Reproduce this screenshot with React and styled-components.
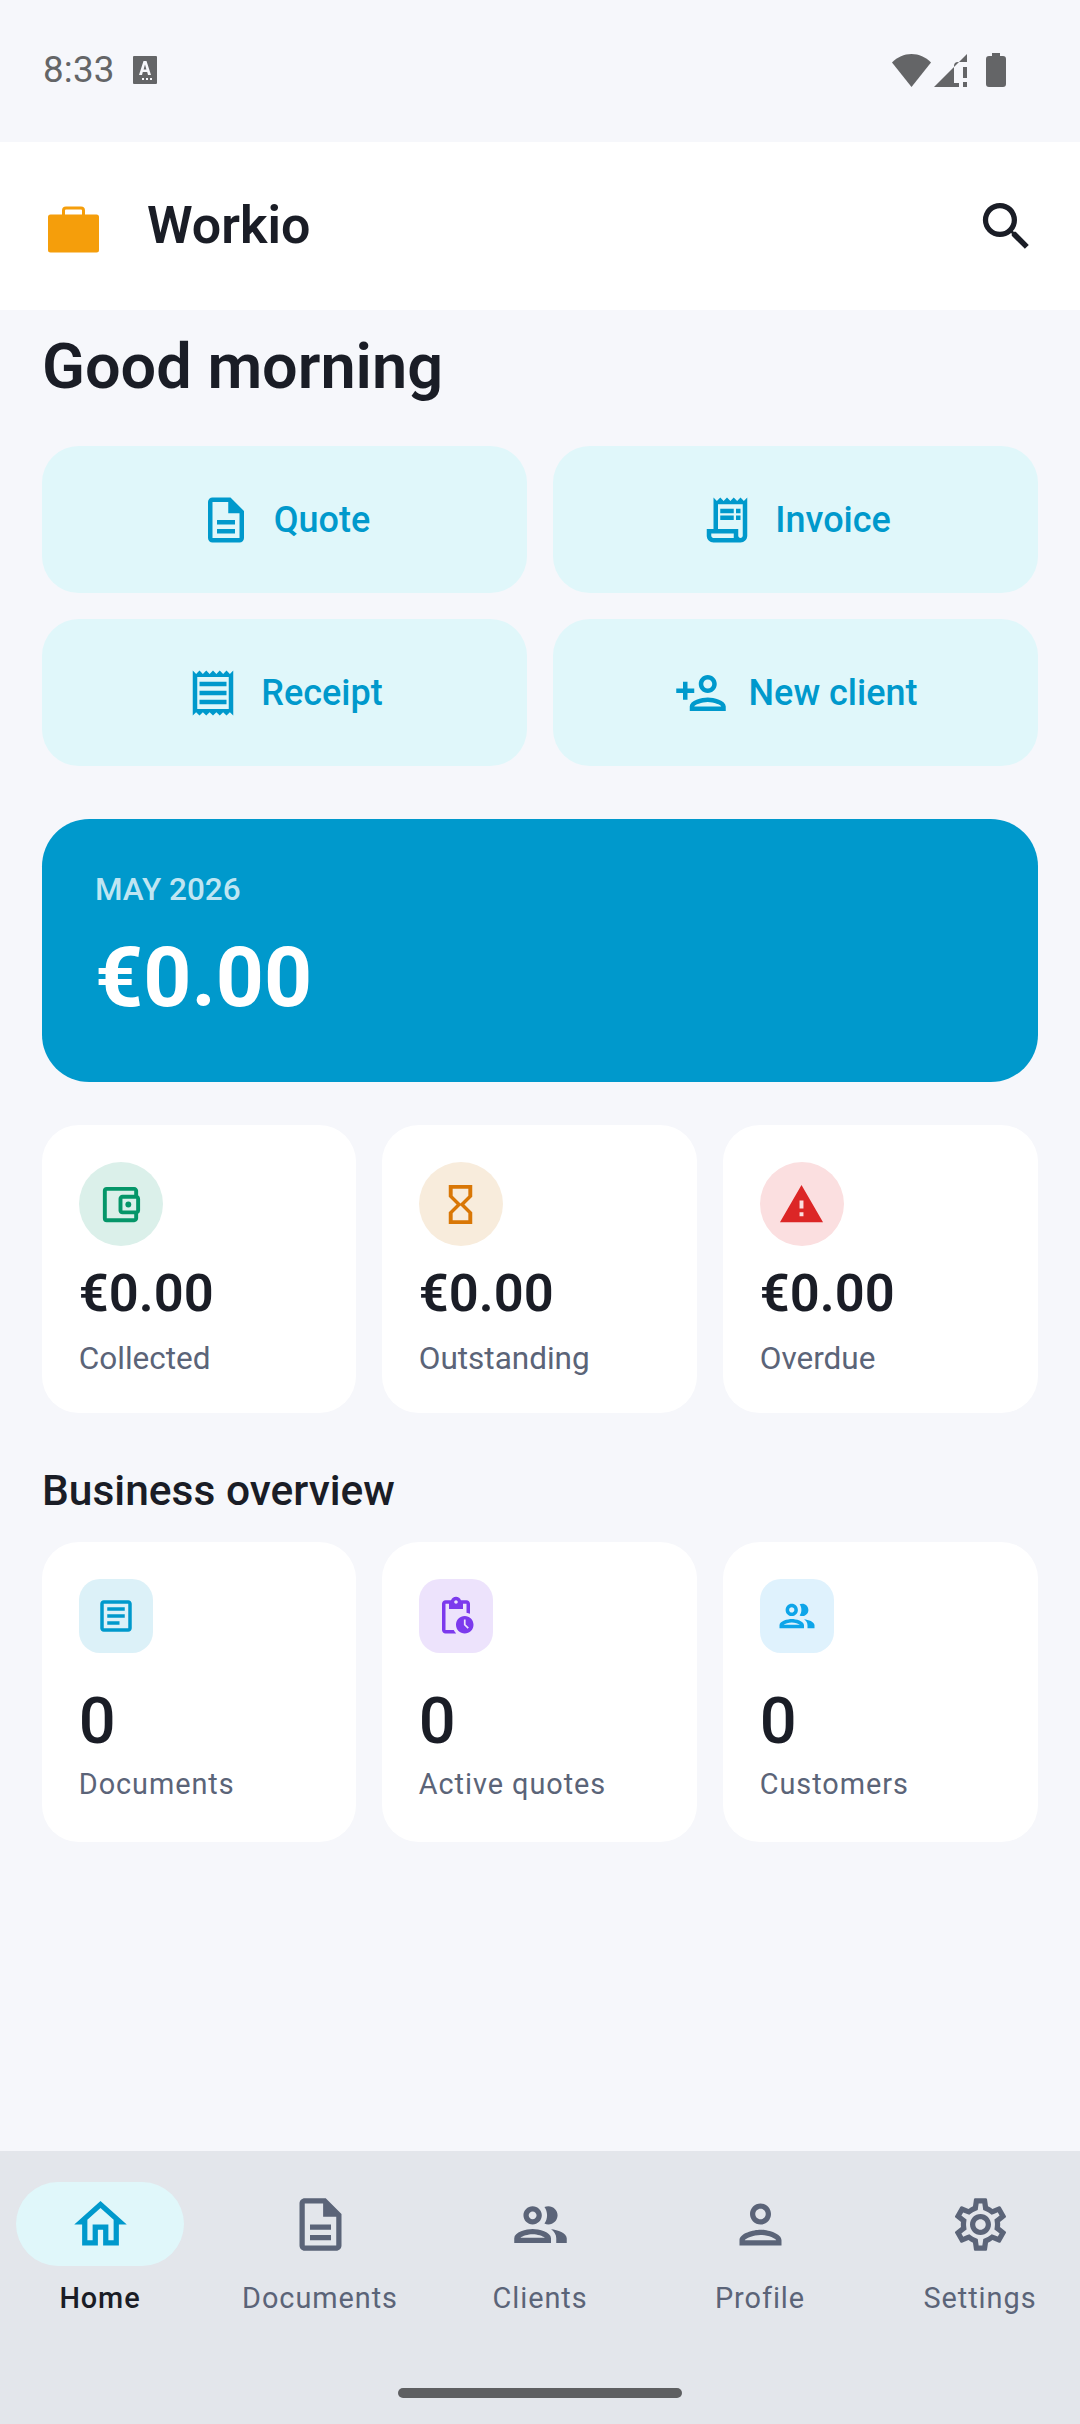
import React from 'react';
import styled, { createGlobalStyle } from 'styled-components';
import {
  MdOutlineDescription,
  MdOutlineReceiptLong,
  MdOutlineReceipt,
  MdOutlinePersonAdd,
  MdOutlineAccountBalanceWallet,
  MdOutlineHourglassEmpty,
  MdWarning,
  MdOutlineArticle,
  MdOutlinePendingActions,
  MdOutlineGroup,
  MdOutlineHome,
  MdOutlinePerson,
  MdOutlineSettings,
  MdSearch,
} from 'react-icons/md';

const GlobalStyle = createGlobalStyle`
  html, body {
    margin: 0;
    padding: 0;
    background: #f6f7fb;
  }
  * {
    box-sizing: border-box;
  }
`;

const Screen = styled.div`
  width: 1080px;
  height: 2424px;
  display: flex;
  flex-direction: column;
  background: #f6f7fb;
  font-family: Roboto, 'Noto Sans', sans-serif;
  color: #1a1d26;
  overflow: hidden;
`;

const StatusBar = styled.div`
  height: 142px;
  flex-shrink: 0;
  display: flex;
  align-items: flex-start;
  justify-content: space-between;
  padding: 50px 74px 0 43px;
  color: #646567;
`;

const StatusLeft = styled.div`
  display: flex;
  align-items: center;
  gap: 18px;
`;

const Clock = styled.span`
  font-size: 36.75px;
  line-height: 40px;
  letter-spacing: 0.2px;
`;

const StatusRight = styled.div`
  display: flex;
  align-items: center;
  gap: 3px;
  height: 40px;
`;

const BatteryGlyph = styled.svg`
  margin-left: 16px;
`;

const Header = styled.header`
  height: 168px;
  flex-shrink: 0;
  display: flex;
  align-items: center;
  background: #fff;
  padding: 0 42px;
`;

const LogoSlot = styled.div`
  width: 63px;
  height: 63px;
  margin-right: 42px;
  display: flex;
`;

const Brand = styled.h1`
  flex: 1;
  margin: 0;
  font-size: 52px;
  font-weight: 600;
  line-height: 60px;
`;

const SearchButton = styled.div`
  width: 63px;
  height: 63px;
  display: flex;
  align-items: center;
  justify-content: center;
  color: #1a1d26;
`;

const Main = styled.main`
  flex: 1;
  display: flex;
  flex-direction: column;
  padding: 0 42px;
`;

const Greeting = styled.h2`
  margin: 21px 0 0;
  font-size: 63px;
  font-weight: 600;
  line-height: 72px;
`;

const ActionGrid = styled.div`
  margin-top: 43px;
  display: grid;
  grid-template-columns: 1fr 1fr;
  gap: 26.25px;
`;

const ActionCard = styled.div`
  height: 147px;
  display: flex;
  align-items: center;
  justify-content: center;
  gap: 21px;
  background: #e0f7fa;
  border-radius: 36.75px;
  color: #0099cc;
  font-size: 36px;
  font-weight: 500;
`;

const MonthCard = styled.section`
  margin-top: 52.75px;
  height: 263px;
  border-radius: 47.25px;
  background: #0099cc;
  color: #fff;
  padding: 52px 53px 0;
`;

const MonthLabel = styled.div`
  font-size: 31.5px;
  line-height: 38px;
  font-weight: 500;
  color: #bfe5f2;
`;

const MonthValue = styled.div`
  margin-top: 20px;
  font-size: 84px;
  line-height: 98px;
  font-weight: 700;
`;

const CardRow = styled.div`
  margin-top: ${({ $top }) => $top}px;
  display: grid;
  grid-template-columns: 314px 315px 315px;
  gap: 26px;
`;

const StatCard = styled.div`
  height: ${({ $height }) => $height}px;
  border-radius: 36.75px;
  background: #fff;
  padding: 37px 36.75px 0;
`;

const RoundIcon = styled.div`
  width: 84px;
  height: 84px;
  border-radius: 50%;
  display: flex;
  align-items: center;
  justify-content: center;
  background: ${({ $bg }) => $bg};
  color: ${({ $fg }) => $fg};
`;

const Amount = styled.div`
  margin-top: 16px;
  font-size: 52.5px;
  line-height: 62px;
  font-weight: 600;
`;

const StatLabel = styled.div`
  margin-top: 16px;
  font-size: 31.5px;
  line-height: 38px;
  color: #5b6478;
`;

const SectionTitle = styled.h3`
  margin: 54px 0 0;
  font-size: 42.5px;
  line-height: 48px;
  font-weight: 500;
`;

const SquareIcon = styled.div`
  width: 74px;
  height: 74px;
  border-radius: 21px;
  display: flex;
  align-items: center;
  justify-content: center;
  background: ${({ $bg }) => $bg};
  color: ${({ $fg }) => $fg};
`;

const Count = styled.div`
  margin-top: 32px;
  font-size: 65px;
  line-height: 72px;
  font-weight: 500;
`;

const CountLabel = styled.div`
  margin-top: 9px;
  font-size: 28.875px;
  line-height: 36px;
  letter-spacing: 0.95px;
  color: #5b6478;
`;

const BottomNav = styled.nav`
  height: 273px;
  flex-shrink: 0;
  position: relative;
  background: #e3e6eb;
  display: flex;
  justify-content: space-between;
  padding: 31px 16px 0;
`;

const NavItem = styled.div`
  width: 168px;
  display: flex;
  flex-direction: column;
  align-items: center;
  gap: 14px;
  font-size: 28.875px;
  line-height: 36px;
  letter-spacing: 0.95px;
  font-weight: ${({ $active }) => ($active ? 500 : 400)};
  color: ${({ $active }) => ($active ? '#1a1d26' : '#5b6478')};
`;

const NavPill = styled.div`
  width: 168px;
  height: 84px;
  border-radius: 42px;
  display: flex;
  align-items: center;
  justify-content: center;
  background: ${({ $active }) => ($active ? '#e0f7fa' : 'transparent')};
  color: ${({ $active }) => ($active ? '#0099cc' : '#5b6478')};
`;

const HomeBar = styled.div`
  position: absolute;
  left: 398px;
  bottom: 26px;
  width: 284px;
  height: 10px;
  border-radius: 5px;
  background: #5e5f61;
`;

const KeyboardBadge = () => (
  <svg width="24" height="28" viewBox="0 0 24 28">
    <path fill="#646567" fillRule="evenodd" d="M1 0h22a1 1 0 0 1 1 1v26a1 1 0 0 1-1 1H1a1 1 0 0 1-1-1V1a1 1 0 0 1 1-1zM10.500 5L6 19h3l.8-3h4.400l.8 3h3L13.500 5h-3zM12 8.500l1.400 5h-2.800l1.400-5zM9 22v2h2v-2H9zm4 0v2h2v-2h-2zm4 0v2h2v-2h-2z" />
  </svg>
);

const WifiIcon = () => (
  <svg width="39" height="33" viewBox="0 0 39 33">
    <path fill="#646567" d="M19.500 0C12 0 5.500 3 0 8.500L19.500 33 39 8.500C33.500 3 27 0 19.500 0z" />
  </svg>
);

const SignalIcon = () => (
  <svg width="33" height="33" viewBox="0 0 33 33">
    <path fill="#646567" d="M33 0V8H24Q20 8 20 12V29H25V33H0Z" />
    <rect x="29" y="13" width="4" height="11" fill="#646567" />
    <rect x="29" y="28" width="4" height="5" fill="#646567" />
  </svg>
);

const BatteryIcon = () => (
  <BatteryGlyph width="20" height="34" viewBox="0 0 20 34">
    <path fill="#646567" d="M6 0h8v3h3a3 3 0 0 1 3 3v25a3 3 0 0 1-3 3H3a3 3 0 0 1-3-3V6a3 3 0 0 1 3-3h3z" />
  </BatteryGlyph>
);

const BriefcaseLogo = () => (
  <svg width="63" height="63" viewBox="0 0 63 63">
    <path fill="none" stroke="#f59e0b" strokeWidth="3" d="M21.500 20v-4.500a2.500 2.500 0 0 1 2.500-2.500h15a2.500 2.500 0 0 1 2.500 2.500V20" />
    <path fill="#f59e0b" d="M8.500 19.500h46a2.500 2.500 0 0 1 2.500 2.500v33a2.500 2.500 0 0 1-2.500 2.500h-46a2.500 2.500 0 0 1-2.500-2.500V22a2.500 2.500 0 0 1 2.500-2.500z" />
  </svg>
);

const actions = [
  { label: 'Quote', Icon: MdOutlineDescription },
  { label: 'Invoice', Icon: MdOutlineReceiptLong },
  { label: 'Receipt', Icon: MdOutlineReceipt },
  { label: 'New client', Icon: MdOutlinePersonAdd },
];

const stats = [
  { label: 'Collected', Icon: MdOutlineAccountBalanceWallet, bg: '#dbf0ea', fg: '#059669' },
  { label: 'Outstanding', Icon: MdOutlineHourglassEmpty, bg: '#f8ecdc', fg: '#d97706' },
  { label: 'Overdue', Icon: MdWarning, bg: '#fbdfe0', fg: '#dc2626' },
];

const counts = [
  { label: 'Documents', Icon: MdOutlineArticle, bg: '#dcf1f8', fg: '#0099cc' },
  { label: 'Active quotes', Icon: MdOutlinePendingActions, bg: '#ede3fc', fg: '#7c3aed' },
  { label: 'Customers', Icon: MdOutlineGroup, bg: '#dff2fd', fg: '#0ea5e9' },
];

const navItems = [
  { label: 'Home', Icon: MdOutlineHome, active: true },
  { label: 'Documents', Icon: MdOutlineDescription },
  { label: 'Clients', Icon: MdOutlineGroup },
  { label: 'Profile', Icon: MdOutlinePerson },
  { label: 'Settings', Icon: MdOutlineSettings },
];

const App = () => (
  <Screen>
    <GlobalStyle />
    <StatusBar>
      <StatusLeft>
        <Clock>8:33</Clock>
        <KeyboardBadge />
      </StatusLeft>
      <StatusRight>
        <WifiIcon />
        <SignalIcon />
        <BatteryIcon />
      </StatusRight>
    </StatusBar>
    <Header>
      <LogoSlot>
        <BriefcaseLogo />
      </LogoSlot>
      <Brand>Workio</Brand>
      <SearchButton>
        <MdSearch size={63} />
      </SearchButton>
    </Header>
    <Main>
      <Greeting>Good morning</Greeting>
      <ActionGrid>
        {actions.map(({ label, Icon }) => (
          <ActionCard key={label}>
            <Icon size={54} />
            {label}
          </ActionCard>
        ))}
      </ActionGrid>
      <MonthCard>
        <MonthLabel>MAY 2026</MonthLabel>
        <MonthValue>€0.00</MonthValue>
      </MonthCard>
      <CardRow $top={43}>
        {stats.map(({ label, Icon, bg, fg }) => (
          <StatCard key={label} $height={288}>
            <RoundIcon $bg={bg} $fg={fg}>
              <Icon size={47} />
            </RoundIcon>
            <Amount>€0.00</Amount>
            <StatLabel>{label}</StatLabel>
          </StatCard>
        ))}
      </CardRow>
      <SectionTitle>Business overview</SectionTitle>
      <CardRow $top={27}>
        {counts.map(({ label, Icon, bg, fg }) => (
          <StatCard key={label} $height={300}>
            <SquareIcon $bg={bg} $fg={fg}>
              <Icon size={42} />
            </SquareIcon>
            <Count>0</Count>
            <CountLabel>{label}</CountLabel>
          </StatCard>
        ))}
      </CardRow>
    </Main>
    <BottomNav>
      {navItems.map(({ label, Icon, active }) => (
        <NavItem key={label} $active={active}>
          <NavPill $active={active}>
            <Icon size={63} />
          </NavPill>
          {label}
        </NavItem>
      ))}
      <HomeBar />
    </BottomNav>
  </Screen>
);

export default App;
